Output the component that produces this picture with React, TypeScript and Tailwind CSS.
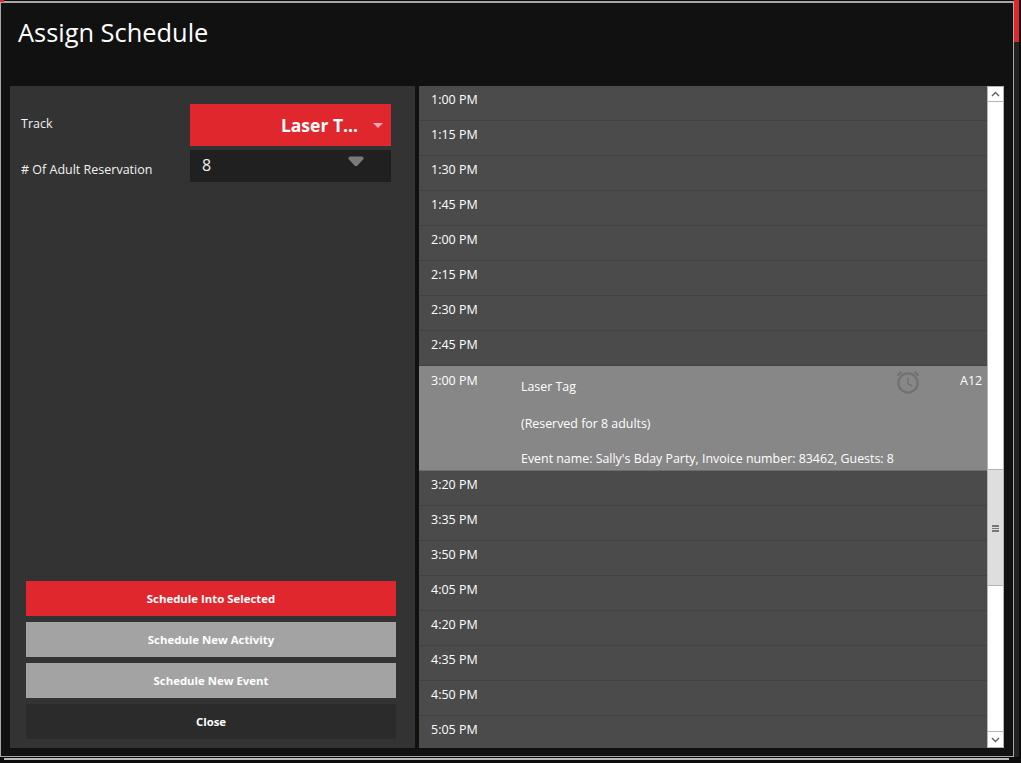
import React from "react";

const before = ["1:00 PM", "1:15 PM", "1:30 PM", "1:45 PM", "2:00 PM", "2:15 PM", "2:30 PM", "2:45 PM"];
const after = ["3:20 PM", "3:35 PM", "3:50 PM", "4:05 PM", "4:20 PM", "4:35 PM", "4:50 PM"];

function Row({ t }: { t: string }) {
  return (
    <div className="h-[35px] shrink-0 border-b border-[#424242] pl-[12px] pt-[4px] text-[12.5px] leading-[20px] text-white">
      {t}
    </div>
  );
}

function Btn({ label, cls }: { label: string; cls: string }) {
  return (
    <div className={`h-[35px] flex items-center justify-center text-[11.4px] font-bold text-white ${cls}`}>{label}</div>
  );
}

function Alarm() {
  return (
    <svg width="26" height="26" viewBox="0 0 26 26" fill="none" stroke="#707070" strokeWidth="2.2">
      <circle cx="13" cy="14" r="9.6" />
      <path d="M13 8.5V14.5L17 17" strokeWidth="1.4" />
      <path d="M2.5 6.5L6.5 2.8M23.5 6.5L19.5 2.8" strokeWidth="2" />
    </svg>
  );
}

function Chevron({ up }: { up?: boolean }) {
  return (
    <svg width="9" height="6" viewBox="0 0 9 6" fill="none" stroke="#606060" strokeWidth="1.4">
      <path d={up ? "M1 5L4.5 1.5L8 5" : "M1 1L4.5 4.5L8 1"} />
    </svg>
  );
}

export default function App() {
  return (
    <div
      className="relative w-[1021px] h-[763px] overflow-hidden bg-[#0c0c0c] flex flex-col"
      style={{ fontFamily: '"Open Sans", "Noto Sans", sans-serif' }}
    >
      <div className="absolute top-0 left-0 w-[4px] h-[2px] bg-[#e1272e]" />
      <div className="h-[757px] flex shrink-0">
        <div className="w-[1014px] h-[757px] pt-[1px] shrink-0">
          <div className="h-[756px] bg-[#111111] border-t-2 border-b border-x border-[#a8a8a8] flex flex-col">
            <div className="h-[83px] shrink-0 pl-[17px] pt-[11px] text-[25.4px] leading-[36px] text-white">
              Assign Schedule
            </div>
            <div className="flex pl-[9px] gap-[4px]">
              <div className="w-[405px] h-[662px] bg-[#333333] flex flex-col pt-[18px] pl-[11px] pb-[9px]">
                <div className="flex h-[46px]">
                  <div className="w-[169px] pt-[11px] text-[12.5px] leading-[18px] text-[#f2f2f2]">Track</div>
                  <div className="w-[201px] h-[42px] bg-[#e1272e] flex items-center justify-end pr-[8px]">
                    <span className="text-[17.5px] font-bold text-white mr-[15px]">Laser T...</span>
                    <span className="w-0 h-0 border-l-[5px] border-r-[5px] border-t-[5px] border-l-transparent border-r-transparent border-t-[#f7a9ac]" />
                  </div>
                </div>
                <div className="flex h-[32px]">
                  <div className="w-[169px] pt-[11px] text-[12.5px] leading-[18px] text-[#f2f2f2]">
                    # Of Adult Reservation
                  </div>
                  <div className="w-[201px] h-[32px] bg-[#202020] flex justify-between pl-[12px] pr-[27px] text-[16px] leading-[30px] text-[#f2f2f2]">
                    <span>8</span>
                    <svg width="16" height="11" viewBox="0 0 16 11" className="mt-[6px]">
                      <path d="M0.5 1.5L2 0.5H14L15.5 1.5V3L9 10H7L0.5 3Z" fill="#7a7a7a" />
                    </svg>
                  </div>
                </div>
                <div className="flex-1" />
                <div className="flex flex-col gap-[6px] pl-[5px] pr-[19px]">
                  <Btn label="Schedule Into Selected" cls="bg-[#e1272e]" />
                  <Btn label="Schedule New Activity" cls="bg-[#a3a3a3]" />
                  <Btn label="Schedule New Event" cls="bg-[#a3a3a3]" />
                  <Btn label="Close" cls="bg-[#2b2b2b]" />
                </div>
              </div>
              <div className="w-[585px] h-[662px] flex">
                <div className="w-[568px] h-[662px] bg-[#4b4b4b] flex flex-col overflow-hidden">
                  {before.map((t) => (
                    <Row key={t} t={t} />
                  ))}
                  <div className="h-[105px] shrink-0 bg-[#878787] border-b border-[#6e6e6e] flex text-[12.5px] text-white">
                    <div className="w-[102px] pl-[12px] pt-[5px] leading-[20px]">3:00 PM</div>
                    <div className="w-[374px] pt-[11px] leading-[20px] flex flex-col gap-[17px] text-[12.4px] whitespace-nowrap">
                      <span>Laser Tag</span>
                      <span>(Reserved for 8 adults)</span>
                      <span className="-mt-[2px]">Event name: Sally's Bday Party, Invoice number: 83462, Guests: 8</span>
                    </div>
                    <div className="w-[65px] pt-[3px]">
                      <Alarm />
                    </div>
                    <div className="pt-[5px] leading-[20px] text-[12.5px]">A12</div>
                  </div>
                  {after.map((t) => (
                    <Row key={t} t={t} />
                  ))}
                  <div className="flex-1 pl-[12px] pt-[4px] text-[12.5px] leading-[20px] text-white">5:05 PM</div>
                </div>
                <div className="w-[17px] h-[662px] bg-white border-[1.5px] border-[#b4b4b4] flex flex-col">
                  <div className="h-[15px] shrink-0 border-b border-[#b4b4b4] flex items-center justify-center">
                    <Chevron up />
                  </div>
                  <div className="h-[367px] shrink-0" />
                  <div className="h-[117px] shrink-0 bg-[#dedede] border-y border-[#b4b4b4] flex flex-col items-center justify-center gap-[1px] pt-[2px]">
                    <div className="w-[7px] h-[1.5px] bg-[#777777]" />
                    <div className="w-[7px] h-[1.5px] bg-[#777777]" />
                    <div className="w-[7px] h-[1.5px] bg-[#777777]" />
                  </div>
                  <div className="flex-1" />
                  <div className="h-[16px] shrink-0 border-t border-[#b4b4b4] flex items-center justify-center">
                    <Chevron />
                  </div>
                </div>
              </div>
            </div>
          </div>
        </div>
        <div className="w-[5px] flex flex-col shrink-0">
          <div className="h-[42px] bg-[#e1272e]" />
          <div className="flex-1 bg-[#222222]" />
        </div>
      </div>
      <div className="mt-[1px] ml-[4px] w-[1005px] h-[2px] bg-[#b8b8b8]" />
    </div>
  );
}
